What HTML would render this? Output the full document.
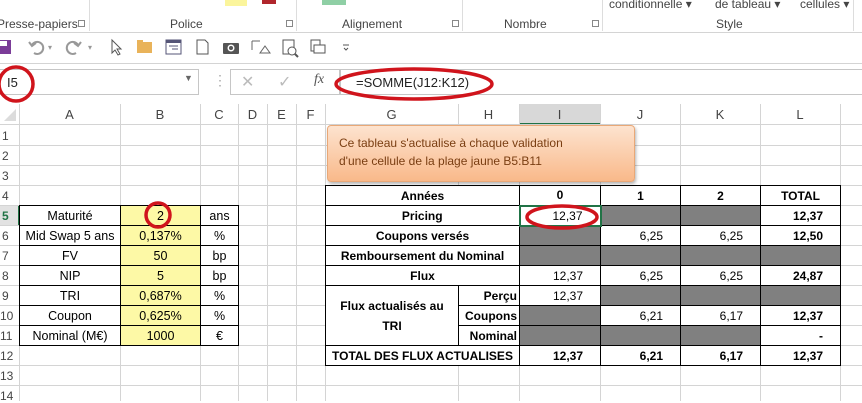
<!DOCTYPE html>
<html><head><meta charset="utf-8"><style>
*{margin:0;padding:0;box-sizing:border-box}
body{width:862px;height:401px;overflow:hidden;background:#fff;font-family:"Liberation Sans",sans-serif;position:relative}
.a{position:absolute;white-space:nowrap}
.rl{font-size:12px;color:#444}
.ch{font-size:13px;color:#444;text-align:center;top:107px}
.rn{font-size:12px;color:#444;left:2px}
table{position:absolute;border-collapse:collapse;table-layout:fixed;font-size:12.5px}
td{border:1px solid #000;height:20px;padding:0 4px;overflow:hidden;white-space:nowrap;background:#fff}
.g{background:#808080}
.y{background:#fdf9a6;text-align:center}
.c{text-align:center}.r{text-align:right;padding-right:17px}
.t2 td{font-size:12px}
.b{font-weight:bold}
</style></head><body>
<!-- ribbon -->
<div class="a" style="left:0;top:0;width:862px;height:33px;border-bottom:1px solid #d4d4d4;background:#fff"></div>
<div class="a" style="left:225px;top:0;width:22px;height:6px;background:#fbf59c"></div>
<div class="a" style="left:262px;top:0;width:14px;height:4px;background:#b0262c"></div>
<div class="a" style="left:322px;top:0;width:24px;height:5px;background:#8fcfa5"></div>
<div class="a rl" style="left:-3px;top:17px">Presse-papiers</div>
<div class="a rl" style="left:170px;top:17px">Police</div>
<div class="a rl" style="left:342px;top:17px">Alignement</div>
<div class="a rl" style="left:504px;top:17px">Nombre</div>
<div class="a rl" style="left:716px;top:17px">Style</div>
<div class="a rl" style="left:609px;top:-3px">conditionnelle ▾</div>
<div class="a rl" style="left:715px;top:-3px">de tableau ▾</div>
<div class="a rl" style="left:800px;top:-3px">cellules ▾</div>
<div class="a" style="left:89px;top:0;width:1px;height:31px;background:#ddd"></div>
<div class="a" style="left:296px;top:0;width:1px;height:31px;background:#ddd"></div>
<div class="a" style="left:462px;top:0;width:1px;height:31px;background:#ddd"></div>
<div class="a" style="left:602px;top:0;width:1px;height:31px;background:#ddd"></div>
<div class="a" style="left:853px;top:0;width:1px;height:31px;background:#ddd"></div>
<div class="a" style="left:78px;top:20px;width:7px;height:7px;border:1px solid #888"></div>
<div class="a" style="left:286px;top:20px;width:7px;height:7px;border:1px solid #888"></div>
<div class="a" style="left:452px;top:20px;width:7px;height:7px;border:1px solid #888"></div>
<div class="a" style="left:592px;top:20px;width:7px;height:7px;border:1px solid #888"></div>
<!-- QAT -->
<svg class="a" style="left:0;top:34px" width="360" height="28" viewBox="0 0 360 28">
<rect x="-3" y="6" width="14" height="14" fill="#7b3c98"/><rect x="0" y="7" width="7" height="5" fill="#fff"/>
<path d="M32 11a6 6 0 1 1 2 8" stroke="#999" stroke-width="2" fill="none"/><path d="M29 8l3 4 4-3" stroke="#999" stroke-width="2" fill="none"/>
<text x="48" y="16" font-size="8" fill="#999">▾</text>
<path d="M78 11a6 6 0 1 0-2 8" stroke="#999" stroke-width="2" fill="none"/><path d="M81 8l-3 4-4-3" stroke="#999" stroke-width="2" fill="none"/>
<text x="88" y="16" font-size="8" fill="#999">▾</text>
<path d="M112 6l0 13 3-3 3 5 2-1-3-5 4 0z" stroke="#555" fill="#fff"/>
<rect x="137" y="8" width="15" height="11" fill="#e9b35a"/><rect x="137" y="6" width="6" height="3" fill="#e9b35a"/>
<rect x="166" y="6" width="15" height="14" fill="#fff" stroke="#557"/><rect x="166" y="6" width="15" height="3" fill="#557"/><path d="M169 12h9M172 15h6" stroke="#557"/>
<path d="M197 6h8l3 3v11h-11z" fill="#fff" stroke="#555"/>
<rect x="223" y="9" width="16" height="11" rx="1" fill="#555"/><circle cx="231" cy="14" r="3.5" fill="#fff"/><circle cx="231" cy="14" r="2" fill="#555"/>
<path d="M252 7h8M252 7v9M265 12l5 7h-10z" stroke="#666" fill="none"/>
<rect x="283" y="6" width="11" height="14" fill="#fff" stroke="#555"/><circle cx="292" cy="17" r="4" fill="#fff" stroke="#555"/><path d="M295 20l3 3" stroke="#555" stroke-width="2"/>
<rect x="311" y="6" width="9" height="11" fill="#fff" stroke="#555"/><rect x="314" y="11" width="11" height="8" fill="#fff" stroke="#555"/>
<path d="M343 11h6M344 14l2 2 2-2" stroke="#555" fill="none"/>
</svg>
<!-- formula bar -->
<div class="a" style="left:0;top:63px;width:862px;height:40px;border-top:1px solid #d4d4d4;background:#fff"></div>
<div class="a" style="left:-1px;top:69px;width:200px;height:26px;border:1px solid #c6c6c6"></div>
<div class="a" style="left:7px;top:75px;font-size:13px;color:#222">I5</div>
<div class="a" style="left:184px;top:73px;font-size:9px;color:#666">▼</div>
<div class="a" style="left:213px;top:72px;font-size:14px;color:#aaa">⋮</div>
<div class="a" style="left:230px;top:69px;width:110px;height:26px;border:1px solid #c6c6c6"></div>
<div class="a" style="left:241px;top:72px;font-size:16px;color:#bbb">✕</div>
<div class="a" style="left:278px;top:72px;font-size:16px;color:#bbb">✓</div>
<div class="a" style="left:314px;top:72px;font-size:14px;color:#555;font-family:'Liberation Serif',serif;font-style:italic">fx</div>
<div class="a" style="left:340px;top:69px;width:530px;height:26px;border:1px solid #c6c6c6"></div>
<div class="a" style="left:356px;top:75px;font-size:13px;color:#222">=SOMME(J12:K12)</div>
<!-- grid -->
<svg class="a" style="left:0;top:104px" width="862" height="297">
<rect x="0" y="0" width="862" height="20" fill="#fff"/>
<rect x="519" y="0" width="81" height="20" fill="#d8d8d8"/>
<rect x="519" y="19" width="81" height="2" fill="#217346"/>
<path d="M4 17l12-12v12z" fill="#dcdcdc"/>
<g stroke="#d4d4d4" stroke-width="1">
<path d="M19.5 0v297M120.5 0v297M200.5 0v297M238.5 0v297M267.5 0v297M296.5 0v297M325.5 0v297M458.5 0v297M519.5 0v297M600.5 0v297M680.5 0v297M760.5 0v297M840.5 0v297"/>
<path d="M0 20.5h862M0 41.5h862M0 61.5h862M0 81.5h862M0 101.5h862M0 121.5h862M0 141.5h862M0 161.5h862M0 181.5h862M0 201.5h862M0 221.5h862M0 241.5h862M0 261.5h862M0 281.5h862"/>
</g>
<rect x="0" y="102" width="19" height="19" fill="#e2e2e2"/><rect x="18" y="102" width="2" height="19" fill="#217346"/>
</svg>
<div class="a ch" style="left:19px;width:101px">A</div>
<div class="a ch" style="left:120px;width:80px">B</div>
<div class="a ch" style="left:200px;width:38px">C</div>
<div class="a ch" style="left:238px;width:29px">D</div>
<div class="a ch" style="left:267px;width:29px">E</div>
<div class="a ch" style="left:296px;width:29px">F</div>
<div class="a ch" style="left:325px;width:133px">G</div>
<div class="a ch" style="left:458px;width:61px">H</div>
<div class="a ch" style="left:519px;width:81px">I</div>
<div class="a ch" style="left:600px;width:80px">J</div>
<div class="a ch" style="left:680px;width:80px">K</div>
<div class="a ch" style="left:760px;width:80px">L</div>
<div class="a rn" style="top:129px">1</div><div class="a rn" style="top:149px">2</div><div class="a rn" style="top:169px">3</div>
<div class="a rn" style="top:189px">4</div><div class="a rn" style="top:209px;color:#217346;font-weight:bold">5</div><div class="a rn" style="top:229px">6</div>
<div class="a rn" style="top:249px">7</div><div class="a rn" style="top:269px">8</div><div class="a rn" style="top:289px">9</div>
<div class="a rn" style="top:309px;left:0">10</div><div class="a rn" style="top:329px;left:0">11</div><div class="a rn" style="top:349px;left:0">12</div>
<div class="a rn" style="top:369px;left:0">13</div><div class="a rn" style="top:389px;left:0">14</div>
<!-- left table -->
<table style="left:19px;top:205px;width:219px">
<colgroup><col style="width:101px"><col style="width:80px"><col style="width:38px"></colgroup>
<tr><td class="c">Maturité</td><td class="y">2</td><td class="c">ans</td></tr>
<tr><td class="c" style="padding:0">Mid Swap 5 ans</td><td class="y">0,137%</td><td class="c">%</td></tr>
<tr><td class="c">FV</td><td class="y">50</td><td class="c">bp</td></tr>
<tr><td class="c">NIP</td><td class="y">5</td><td class="c">bp</td></tr>
<tr><td class="c">TRI</td><td class="y">0,687%</td><td class="c">%</td></tr>
<tr><td class="c">Coupon</td><td class="y">0,625%</td><td class="c">%</td></tr>
<tr><td class="c">Nominal (M€)</td><td class="y">1000</td><td class="c">€</td></tr>
</table>
<!-- right table -->
<table class="t2" style="left:325px;top:185px;width:515px">
<colgroup><col style="width:133px"><col style="width:61px"><col style="width:81px"><col style="width:80px"><col style="width:80px"><col style="width:80px"></colgroup>
<tr><td colspan="2" class="c b">Années</td><td class="c b">0</td><td class="c b">1</td><td class="c b">2</td><td class="c b">TOTAL</td></tr>
<tr><td colspan="2" class="c b">Pricing</td><td class="r" style="border:2px solid #217346">12,37</td><td class="g"></td><td class="g"></td><td class="r b">12,37</td></tr>
<tr><td colspan="2" class="c b">Coupons versés</td><td class="g"></td><td class="r">6,25</td><td class="r">6,25</td><td class="r b">12,50</td></tr>
<tr><td colspan="2" class="c b" style="padding:0">Remboursement du Nominal</td><td class="g"></td><td class="g"></td><td class="g"></td><td class="g"></td></tr>
<tr><td colspan="2" class="c b">Flux</td><td class="r">12,37</td><td class="r">6,25</td><td class="r">6,25</td><td class="r b">24,87</td></tr>
<tr><td rowspan="3" class="c b" style="white-space:normal;line-height:20px;padding:0 8px">Flux actualisés au TRI</td><td class="b" style="text-align:right;padding:0 2px">Perçu</td><td class="r">12,37</td><td class="g"></td><td class="g"></td><td class="g"></td></tr>
<tr><td class="b" style="text-align:right;padding:0 2px">Coupons</td><td class="g"></td><td class="r">6,21</td><td class="r">6,17</td><td class="r b">12,37</td></tr>
<tr><td class="b" style="text-align:right;padding:0 2px">Nominal</td><td class="g"></td><td class="g"></td><td class="g"></td><td class="r b">-</td></tr>
<tr><td colspan="2" class="c b" style="padding:0">TOTAL DES FLUX ACTUALISES</td><td class="r b">12,37</td><td class="r b">6,21</td><td class="r b">6,17</td><td class="r b">12,37</td></tr>
</table>
<!-- comment -->
<div class="a" style="left:327px;top:125px;width:308px;height:57px;border-radius:4px;background:linear-gradient(#fde3cf,#f9b98a);border:1px solid #e9a877;box-shadow:1px 2px 3px rgba(0,0,0,.3)"></div>
<div class="a" style="left:339px;top:134px;font-size:12px;line-height:18px;color:#7a3e12">Ce tableau s'actualise à chaque validation<br>d'une cellule de la plage jaune B5:B11</div>
<!-- red circles -->
<svg class="a" style="left:0;top:0" width="862" height="401">
<g fill="none" stroke="#d0141c" stroke-width="3.5">
<circle cx="16" cy="84" r="17"/>
<ellipse cx="414" cy="84" rx="78" ry="15"/>
<circle cx="158" cy="215" r="12"/>
<ellipse cx="562" cy="217" rx="35" ry="11"/>
</g></svg>
</body></html>
